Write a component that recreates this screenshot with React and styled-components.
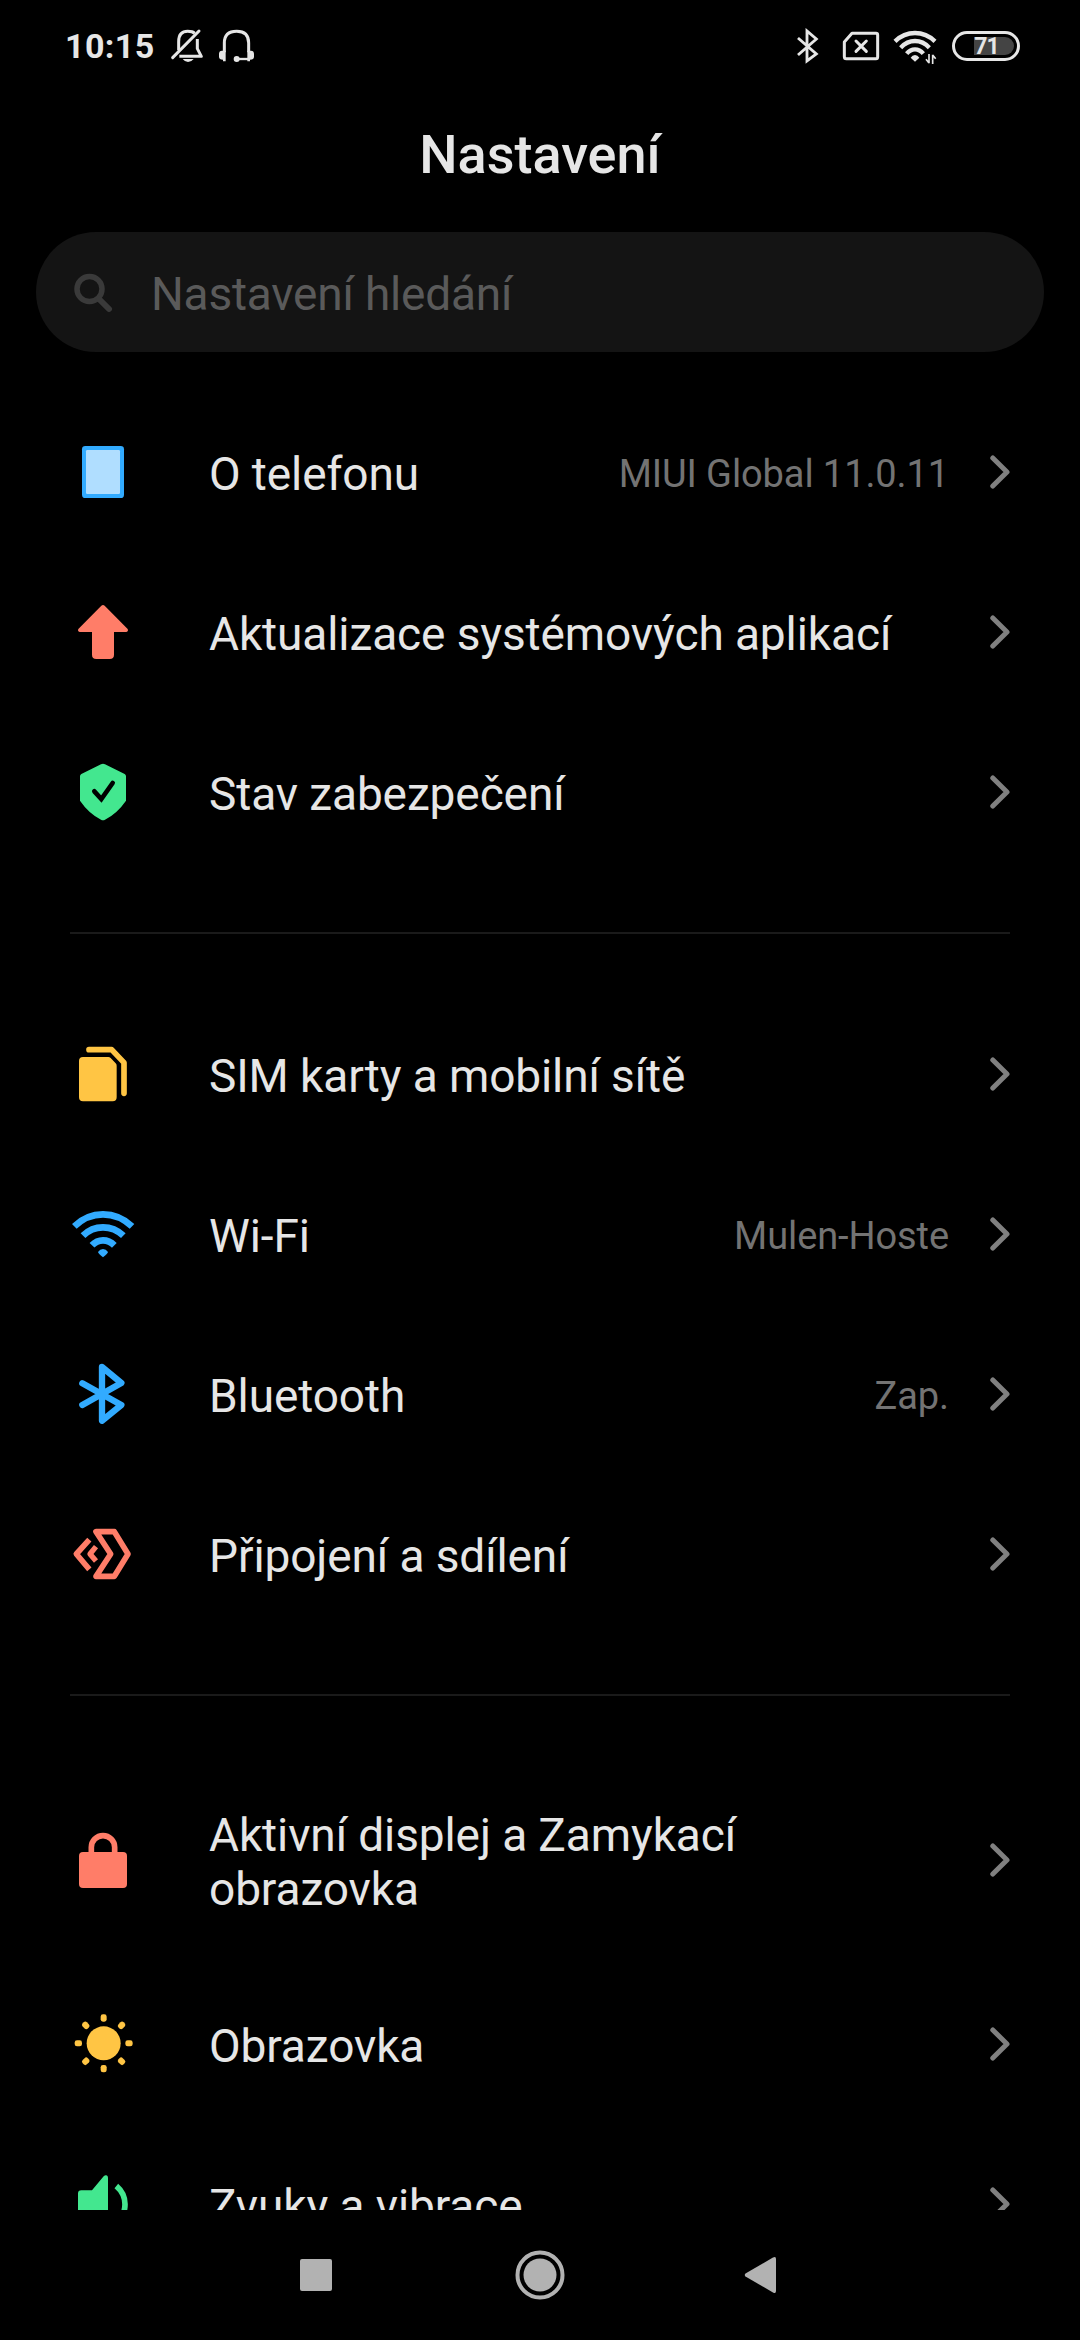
import React from 'react';
import styled, { createGlobalStyle } from 'styled-components';

const GlobalStyle = createGlobalStyle`
  * { box-sizing: border-box; }
  body { margin: 0; background: #000; }
`;

const Screen = styled.div`
  display: flex;
  flex-direction: column;
  width: 1080px;
  height: 2340px;
  overflow: hidden;
  background: #000;
  color: #e6e6e6;
  font-family: Roboto, 'Liberation Sans', sans-serif;
`;

const StatusBar = styled.header`
  display: flex;
  align-items: center;
  justify-content: space-between;
  flex: none;
  height: 92px;
  padding: 0 60px 0 65px;
`;

const StatusGroup = styled.div`
  display: flex;
  align-items: center;
`;

const Clock = styled.time`
  width: 105px;
  font-size: 34px;
  font-weight: 700;
  letter-spacing: 0.4px;
  line-height: 40px;
`;

const Glyph = styled.svg`
  display: block;
  flex: none;
  margin-left: ${(p) => p.$gap || 0}px;
`;

const Battery = styled.div`
  position: relative;
  display: flex;
  align-items: center;
  justify-content: center;
  width: 68px;
  height: 30px;
  margin-left: 15px;
  border: 3px solid #e6e6e6;
  border-radius: 15px;
`;

const BatteryFill = styled.div`
  position: absolute;
  top: 3px;
  right: 3px;
  bottom: 3px;
  width: 40px;
  border-radius: 0 9px 9px 0;
  background: #444;
`;

const BatteryText = styled.span`
  position: relative;
  padding: 2px 0 0 1px;
  font-size: 23px;
  font-weight: 700;
  line-height: 24px;
  letter-spacing: -1px;
`;

const TitleBar = styled.div`
  display: flex;
  align-items: center;
  justify-content: center;
  flex: none;
  height: 140px;
  padding-bottom: 15px;
`;

const Title = styled.h1`
  margin: 0;
  font-size: 54px;
  font-weight: 500;
  line-height: 64px;
`;

const SearchBox = styled.div`
  display: flex;
  align-items: center;
  flex: none;
  height: 120px;
  margin: 0 36px;
  padding-left: 36px;
  border-radius: 60px;
  background: #141414;
`;

const SearchHint = styled.span`
  margin-left: 37px;
  padding-top: 4px;
  color: #5a5a5a;
  font-size: 46px;
  line-height: 54px;
  letter-spacing: -0.2px;
`;

const List = styled.main`
  flex: 1;
  min-height: 0;
  padding-top: 40px;
  overflow: hidden;
`;

const Divider = styled.hr`
  height: 2px;
  margin: 60px 70px;
  border: 0;
  background: #1a1a1a;
`;

const Row = styled.div`
  display: flex;
  align-items: center;
  min-height: 160px;
  padding: 48px 70px 48px 60px;
`;

const RowIcon = styled.svg`
  display: block;
  flex: none;
  width: 90px;
  height: 90px;
  margin: -20px 59px -20px 0;
`;

const Label = styled.span`
  flex: 1;
  max-width: ${(p) => (p.$narrow ? '600px' : 'none')};
  margin-right: auto;
  padding-top: 4px;
  font-size: 46px;
  line-height: 54px;
  letter-spacing: -0.1px;
  white-space: ${(p) => (p.$narrow ? 'normal' : 'nowrap')};
`;

const Value = styled.span`
  padding-top: 4px;
  color: #737373;
  font-size: 38px;
  line-height: 44px;
  letter-spacing: -0.1px;
`;

const Chevron = styled.svg`
  display: block;
  flex: none;
  width: 20px;
  height: 34px;
  margin-left: 41px;
`;

const NavBar = styled.nav`
  display: flex;
  align-items: center;
  flex: none;
  height: 130px;
  padding-left: 300px;
`;

const BLUE = '#32abff';
const RED = '#ff7d68';
const GREEN = '#43e78f';
const YELLOW = '#ffc544';

const icons = {
  phone: (
    <RowIcon viewBox="0 -9 270 270">
      <rect x="66" y="48" width="126" height="156" rx="10" fill={BLUE} />
      <rect x="78" y="60" width="102" height="132" rx="4" fill="#b0deff" />
    </RowIcon>
  ),
  update: (
    <RowIcon viewBox="0 471 270 270">
      <path
        d="M124 527Q129 523 134 527L203 597Q206 604 199 606H162V674Q162 687 149 687H109Q96 687 96 674V606H59Q52 604 55 597Z"
        fill={RED}
      />
    </RowIcon>
  ),
  shield: (
    <RowIcon viewBox="0 951 270 270">
      <path
        d="M123 1003Q129 1000 135 1003L194 1032Q198 1034 198 1039V1112Q172 1150 135 1169Q129 1172 123 1169Q86 1150 60 1112V1039Q60 1034 64 1032Z"
        fill={GREEN}
      />
      <path d="M103 1084L124 1107L158 1059" fill="none" stroke="#000" strokeWidth="14" strokeLinecap="round" />
    </RowIcon>
  ),
  sim: (
    <RowIcon viewBox="0 -3 270 270">
      <path
        d="M69 81H145Q149 81 152 84L167 100Q170 103 170 107V202Q170 214 158 214H69Q57 214 57 202V93Q57 81 69 81Z"
        fill={YELLOW}
      />
      <path
        d="M87 59H155L192 98V190"
        fill="none"
        stroke={YELLOW}
        strokeWidth="17"
        strokeLinecap="round"
        strokeLinejoin="round"
      />
    </RowIcon>
  ),
  wifi: (
    <RowIcon viewBox="0 477 270 270">
      <g fill="none" stroke={BLUE} strokeWidth="20">
        <path d="M43 589Q80 553 129 553Q178 553 216 589" />
        <path d="M69 617Q94 592 129 592Q164 592 190 617" />
        <path d="M96 646Q110 631 129 631Q148 631 163 646" />
      </g>
      <path d="M114 666Q120 657 129 657Q138 657 144 666Q144 670 129 682Q114 670 114 666Z" fill={BLUE} />
    </RowIcon>
  ),
  bluetooth: (
    <RowIcon viewBox="0 957 270 270">
      <path
        d="M67 1060L184 1125L126 1172V1011L184 1059L67 1125"
        fill="none"
        stroke={BLUE}
        strokeWidth="19"
        strokeLinecap="round"
        strokeLinejoin="round"
      />
    </RowIcon>
  ),
  share: (
    <RowIcon viewBox="0 27 270 270">
      <path
        d="M108 95H163L204 162L163 229H108L152 162Z"
        fill="none"
        stroke={RED}
        strokeWidth="17"
        strokeLinejoin="round"
      />
      <path d="M88 119L49 162L88 208" fill="none" stroke={RED} strokeWidth="17" strokeLinejoin="round" />
      <path d="M108 140L90 162L108 183" fill="none" stroke={RED} strokeWidth="16" strokeLinejoin="round" />
    </RowIcon>
  ),
  lock: (
    <RowIcon viewBox="0 15 270 270">
      <rect x="57" y="126" width="144" height="108" rx="12" fill={RED} />
      <path d="M94 130V112A35 35 0 0 1 164 112V130" fill="none" stroke={RED} strokeWidth="17" />
    </RowIcon>
  ),
  sun: (
    <RowIcon viewBox="0 567 270 270">
      <circle cx="131" cy="700" r="51" fill={YELLOW} />
      {[0, 45, 90, 135, 180, 225, 270, 315].map((a) => (
        <rect key={a} x="122" y="613" width="18" height="22" rx="7" fill={YELLOW} transform={`rotate(${a} 131 700)`} />
      ))}
    </RowIcon>
  ),
  sound: (
    <RowIcon viewBox="0 1047 270 270">
      <path
        d="M64 1141H96L131 1099Q135 1095 139 1096Q144 1097 144 1103V1265Q144 1271 138 1270Q135 1269 131 1266L96 1223H64Q54 1223 54 1213V1151Q54 1141 64 1141Z"
        fill={GREEN}
      />
      <path d="M169 1128Q195 1150 195 1183Q195 1216 169 1238" fill="none" stroke={GREEN} strokeWidth="17" />
    </RowIcon>
  ),
};

const groups = [
  [
    { icon: 'phone', label: 'O telefonu', value: 'MIUI Global 11.0.11' },
    { icon: 'update', label: 'Aktualizace systémových aplikací' },
    { icon: 'shield', label: 'Stav zabezpečení' },
  ],
  [
    { icon: 'sim', label: 'SIM karty a mobilní sítě' },
    { icon: 'wifi', label: 'Wi-Fi', value: 'Mulen-Hoste' },
    { icon: 'bluetooth', label: 'Bluetooth', value: 'Zap.' },
    { icon: 'share', label: 'Připojení a sdílení' },
  ],
  [
    { icon: 'lock', label: 'Aktivní displej a Zamykací obrazovka', narrow: true },
    { icon: 'sun', label: 'Obrazovka' },
    { icon: 'sound', label: 'Zvuky a vibrace' },
  ],
];

function SettingRow({ icon, label, value, narrow }) {
  return (
    <Row>
      {icons[icon]}
      <Label $narrow={narrow}>{label}</Label>
      {value && <Value>{value}</Value>}
      <Chevron viewBox="0 0 20 34">
        <path
          d="M2.8 3L17 17L2.8 31"
          fill="none"
          stroke="#808080"
          strokeWidth="5"
          strokeLinecap="round"
          strokeLinejoin="round"
        />
      </Chevron>
    </Row>
  );
}

const INK = '#e6e6e6';

export default function App() {
  return (
    <Screen>
      <GlobalStyle />
      <StatusBar>
        <StatusGroup>
          <Clock>10:15</Clock>
          <Glyph width="34" height="36" viewBox="360 39 102 108" fill="none" stroke={INK} strokeWidth="9">
            <path d="M386 106V80Q386 49 413 49Q428 49 434 55" />
            <path d="M442 72V101L454 124H388" strokeLinejoin="round" />
            <path d="M368 128L447 48" strokeLinecap="round" />
            <path d="M398 132H431Q424 141 414 141Q405 141 398 132Z" fill={INK} stroke="none" />
          </Glyph>
          <Glyph $gap={14} width="37" height="36" viewBox="504 39 111 108" fill="none" stroke={INK} strokeWidth="9">
            <path d="M523 112V84Q523 49 560 49Q596 49 596 84V112" />
            <path d="M560 132H598" strokeWidth="7" />
            <circle cx="560" cy="132" r="9" fill={INK} stroke="none" />
            <path
              d="M516 107H527V139H519V134Q507 134 507 125V117Q507 107 516 107ZM592 107H603Q612 107 612 117V125Q612 134 600 134V139H592Z"
              fill={INK}
              stroke="none"
            />
          </Glyph>
        </StatusGroup>
        <StatusGroup>
          <Glyph width="23" height="36" viewBox="48 39 69 108" fill="none" stroke={INK} strokeWidth="8.5">
            <path d="M54 69L109 117L81 138V48L109 72L54 120" strokeLinejoin="miter" />
          </Glyph>
          <Glyph $gap={23} width="38" height="36" viewBox="186 39 114 108" fill="none" stroke={INK} strokeWidth="9">
            <path d="M216 55H288Q293 55 293 60V125Q293 131 288 131H199Q193 131 193 125V81Z" strokeLinejoin="round" />
            <path d="M228 78L259 109M259 78L228 109" strokeWidth="9" strokeLinecap="round" />
          </Glyph>
          <Glyph $gap={13} width="44" height="36" viewBox="339 39 132 108" fill="none" stroke={INK} strokeWidth="13">
            <path d="M345 79Q371 54 405 54Q439 54 465 79" />
            <path d="M362 98Q381 78 405 78Q429 78 448 98" />
            <path d="M380 116Q391 103 405 103Q419 103 430 116" />
            <path d="M392 128Q397 120 405 120Q413 120 418 128L405 140Z" fill={INK} stroke="none" />
            <path d="M447 117V145M447 144L438 133M458 147V119M458 120L467 131" strokeWidth="5" />
          </Glyph>
          <Battery>
            <BatteryFill />
            <BatteryText>71</BatteryText>
          </Battery>
        </StatusGroup>
      </StatusBar>

      <TitleBar>
        <Title>Nastavení</Title>
      </TitleBar>

      <SearchBox>
        <Glyph width="42" height="42" viewBox="0 0 42 42" fill="none" stroke="#3a3a3a">
          <circle cx="17.5" cy="18" r="12.5" strokeWidth="5.5" />
          <path d="M27 28L37 38" strokeWidth="6" strokeLinecap="round" />
        </Glyph>
        <SearchHint>Nastavení hledání</SearchHint>
      </SearchBox>

      <List>
        {groups.map((rows, i) => (
          <React.Fragment key={i}>
            {i > 0 && <Divider />}
            {rows.map((row) => (
              <SettingRow key={row.label} {...row} />
            ))}
          </React.Fragment>
        ))}
      </List>

      <NavBar>
        <Glyph width="32" height="32" viewBox="0 0 32 32">
          <rect width="32" height="32" rx="2" fill="#b2b2b2" />
        </Glyph>
        <Glyph $gap={183} width="50" height="50" viewBox="0 0 50 50">
          <circle cx="25" cy="25" r="22.5" fill="none" stroke="#b2b2b2" strokeWidth="4" />
          <circle cx="25" cy="25" r="16.5" fill="#b2b2b2" />
        </Glyph>
        <Glyph $gap={179} width="32" height="38" viewBox="0 0 32 38">
          <path d="M29 1.5Q32 0 32 3V35Q32 38 29 36.5L1.500 20.500Q0 19 1.500 17.500Z" fill="#b2b2b2" />
        </Glyph>
      </NavBar>
    </Screen>
  );
}
